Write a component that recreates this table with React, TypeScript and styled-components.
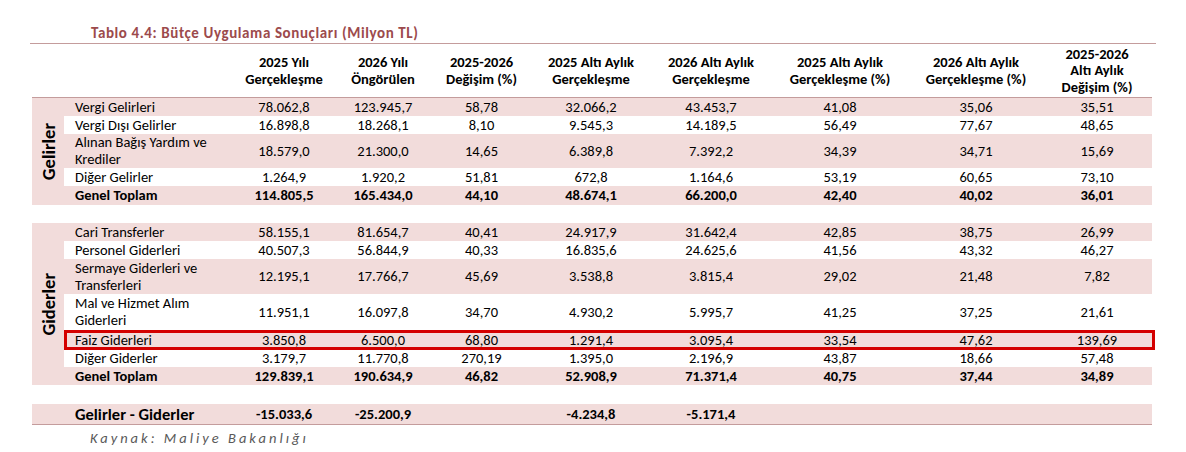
import React from 'react';
import styled, { createGlobalStyle, css } from 'styled-components';

const PINK = '#f2dcdb';
const LINE = '#c49c9c';
const FONT = `Carlito, Calibri, Lato, "Noto Sans", sans-serif`;
const DATA_COLS = '171px 98px 100px 97px 122px 118px 140px 132px 110px';
const ALL_COLS = `32px ${DATA_COLS}`;

const Global = createGlobalStyle`
  html, body { margin: 0; padding: 0; background: #fff; }
  body { font-family: ${FONT}; color: #000; }
`;

const Page = styled.div`
  width: 1126px;
  margin-left: 30px;
`;

const Title = styled.h1`
  margin: 0;
  padding: 24px 0 1px 61px;
  font-size: 15px;
  line-height: 18px;
  font-weight: 700;
  letter-spacing: 0.6px;
  color: #9c4a4c;
  border-bottom: 1px solid ${LINE};
`;

const Table = styled.div`
  padding: 0 4px 0 2px;
`;

const Header = styled.div`
  display: grid;
  grid-template-columns: ${ALL_COLS};
  height: 53px;
  align-items: center;
  border-bottom: 1px solid ${LINE};
`;

const HeadCell = styled.div`
  text-align: center;
  font-weight: 700;
  font-size: 14.5px;
  line-height: 16.5px;
`;

const Section = styled.section<{ $gap?: number }>`
  display: flex;
  margin-top: ${(p) => p.$gap ?? 0}px;
`;

const Side = styled.div`
  width: 32px;
  flex: none;
  background: ${PINK};
  display: flex;
  align-items: center;
  justify-content: center;
`;

const SideLabel = styled.span`
  writing-mode: vertical-rl;
  transform: rotate(180deg);
  font-weight: 700;
  font-size: 18.5px;
  line-height: 20px;
  margin-left: 2px;
`;

const Rows = styled.div`
  display: flex;
  flex-direction: column;
`;

const Row = styled.div<{ $h: number; $pink: boolean; $bold?: boolean; $boxed?: boolean }>`
  position: relative;
  display: grid;
  grid-template-columns: ${DATA_COLS};
  height: ${(p) => p.$h}px;
  align-items: center;
  background: ${(p) => (p.$pink ? PINK : '#fff')};
  font-weight: ${(p) => (p.$bold ? 700 : 400)};
  font-size: 14.5px;
  line-height: 17px;
  ${(p) =>
    p.$boxed &&
    css`
      &::after {
        content: '';
        position: absolute;
        left: 0;
        right: -3px;
        top: 0;
        bottom: 0;
        border: 3px solid #d40000;
        pointer-events: none;
      }
    `}
`;

const Label = styled.div`
  padding-left: 11px;
`;

const Value = styled.div`
  text-align: center;
`;

const FinalRow = styled.div`
  display: grid;
  grid-template-columns: ${ALL_COLS};
  height: 20px;
  margin-top: 19px;
  align-items: center;
  background: ${PINK};
  border-bottom: 1px solid ${LINE};
  font-weight: 700;
  font-size: 14.5px;
`;

const FinalLabel = styled.div`
  padding-left: 11px;
  font-size: 16.5px;
`;

const Source = styled.div`
  padding-left: 60px;
  margin-top: 4px;
  font-style: italic;
  font-size: 14.5px;
  line-height: 18px;
  letter-spacing: 3px;
  color: #595959;
`;

type RowData = {
  label: React.ReactNode;
  values: string[];
  h: number;
  pink: boolean;
  bold?: boolean;
  boxed?: boolean;
};

const headers: string[][] = [
  [],
  [],
  ['2025 Yılı', 'Gerçekleşme'],
  ['2026 Yılı', 'Öngörülen'],
  ['2025-2026', 'Değişim (%)'],
  ['2025 Altı Aylık', 'Gerçekleşme'],
  ['2026 Altı Aylık', 'Gerçekleşme'],
  ['2025 Altı Aylık', 'Gerçekleşme (%)'],
  ['2026 Altı Aylık', 'Gerçekleşme (%)'],
  ['2025-2026', 'Altı Aylık', 'Değişim (%)'],
];

const gelirler: RowData[] = [
  { label: 'Vergi Gelirleri', values: ['78.062,8', '123.945,7', '58,78', '32.066,2', '43.453,7', '41,08', '35,06', '35,51'], h: 18, pink: true },
  { label: 'Vergi Dışı Gelirler', values: ['16.898,8', '18.268,1', '8,10', '9.545,3', '14.189,5', '56,49', '77,67', '48,65'], h: 18, pink: false },
  { label: <>Alınan Bağış Yardım ve<br />Krediler</>, values: ['18.579,0', '21.300,0', '14,65', '6.389,8', '7.392,2', '34,39', '34,71', '15,69'], h: 34, pink: true },
  { label: 'Diğer Gelirler', values: ['1.264,9', '1.920,2', '51,81', '672,8', '1.164,6', '53,19', '60,65', '73,10'], h: 18, pink: false },
  { label: 'Genel Toplam', values: ['114.805,5', '165.434,0', '44,10', '48.674,1', '66.200,0', '42,40', '40,02', '36,01'], h: 19, pink: true, bold: true },
];

const giderler: RowData[] = [
  { label: 'Cari Transferler', values: ['58.155,1', '81.654,7', '40,41', '24.917,9', '31.642,4', '42,85', '38,75', '26,99'], h: 18, pink: true },
  { label: 'Personel Giderleri', values: ['40.507,3', '56.844,9', '40,33', '16.835,6', '24.625,6', '41,56', '43,32', '46,27'], h: 18, pink: false },
  { label: <>Sermaye Giderleri ve<br />Transferleri</>, values: ['12.195,1', '17.766,7', '45,69', '3.538,8', '3.815,4', '29,02', '21,48', '7,82'], h: 35, pink: true },
  { label: <>Mal ve Hizmet Alım<br />Giderleri</>, values: ['11.951,1', '16.097,8', '34,70', '4.930,2', '5.995,7', '41,25', '37,25', '21,61'], h: 36, pink: false },
  { label: 'Faiz Giderleri', values: ['3.850,8', '6.500,0', '68,80', '1.291,4', '3.095,4', '33,54', '47,62', '139,69'], h: 20, pink: true, boxed: true },
  { label: 'Diğer Giderler', values: ['3.179,7', '11.770,8', '270,19', '1.395,0', '2.196,9', '43,87', '18,66', '57,48'], h: 17, pink: false },
  { label: 'Genel Toplam', values: ['129.839,1', '190.634,9', '46,82', '52.908,9', '71.371,4', '40,75', '37,44', '34,89'], h: 18, pink: true, bold: true },
];

const finalValues = ['-15.033,6', '-25.200,9', '', '-4.234,8', '-5.171,4', '', '', ''];

function Block({ title, rows, gap }: { title: string; rows: RowData[]; gap?: number }) {
  return (
    <Section $gap={gap}>
      <Side>
        <SideLabel>{title}</SideLabel>
      </Side>
      <Rows>
        {rows.map((r, i) => (
          <Row key={i} $h={r.h} $pink={r.pink} $bold={r.bold} $boxed={r.boxed}>
            <Label>{r.label}</Label>
            {r.values.map((v, j) => (
              <Value key={j}>{v}</Value>
            ))}
          </Row>
        ))}
      </Rows>
    </Section>
  );
}

export default function App() {
  return (
    <>
      <Global />
      <Page>
        <Title>Tablo 4.4: Bütçe Uygulama Sonuçları (Milyon TL)</Title>
        <Table>
          <Header>
            {headers.map((lines, i) => (
              <HeadCell key={i}>
                {lines.map((l, k) => (
                  <div key={k}>{l}</div>
                ))}
              </HeadCell>
            ))}
          </Header>
          <Block title="Gelirler" rows={gelirler} />
          <Block title="Giderler" rows={giderler} gap={18} />
          <FinalRow>
            <div />
            <FinalLabel>Gelirler - Giderler</FinalLabel>
            {finalValues.map((v, j) => (
              <Value key={j}>{v}</Value>
            ))}
          </FinalRow>
        </Table>
        <Source>Kaynak: Maliye Bakanlığı</Source>
      </Page>
    </>
  );
}
